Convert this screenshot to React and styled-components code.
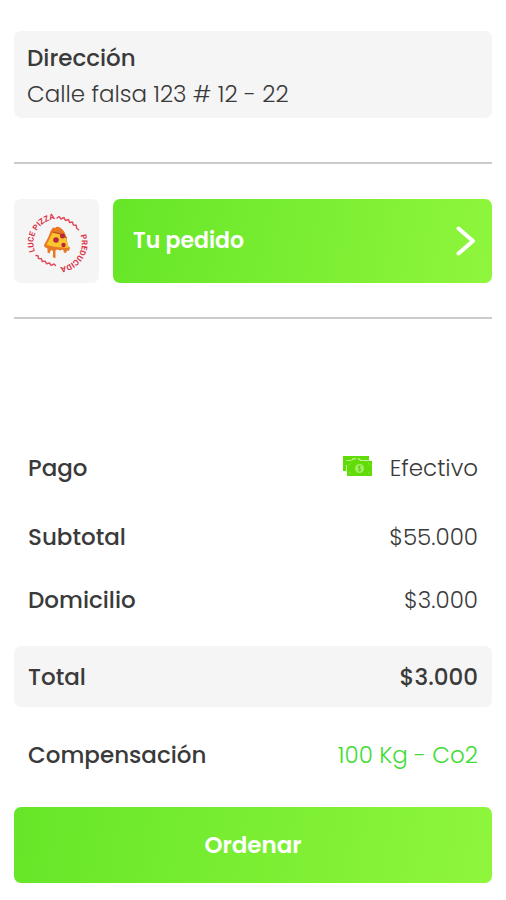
import React from "react";
import styled, { createGlobalStyle } from "styled-components";

const GlobalStyle = createGlobalStyle`
  *, *::before, *::after { box-sizing: border-box; }
  body {
    margin: 0;
    background: #fff;
    color: #3a3a3a;
    font-family: Poppins, Inter, sans-serif;
    font-size: 23px;
    line-height: 32px;
  }
`;

const Page = styled.main`
  padding: 31px 14px 17px;
`;

const AddressCard = styled.section`
  padding: 11px 13px 8px;
  border-radius: 7px;
  background: #f5f5f5;
`;

const Title = styled.h2`
  margin: 0 0 4px;
  font-size: 23px;
  font-weight: 500;
`;

const Address = styled.p`
  margin: 0;
  font-weight: 300;
`;

const Divider = styled.hr`
  height: 2px;
  margin: ${({ $top }) => $top}px 0 0;
  border: 0;
  background: #cbcbcb;
`;

const OrderRow = styled.div`
  display: flex;
  gap: 14px;
  margin-top: 35px;
`;

const LogoTile = styled.div`
  flex: none;
  width: 85px;
  height: 84px;
  border-radius: 7px;
  background: #f5f5f5;

  svg { display: block; }
`;

const GreenButton = styled.button`
  display: flex;
  align-items: center;
  justify-content: center;
  width: 100%;
  height: 76px;
  padding: 0 16px;
  border: 0;
  border-radius: 7px;
  background: linear-gradient(100deg, #66e628 0%, #8ff63c 100%);
  color: #fff;
  font: inherit;
  font-weight: 600;
  cursor: pointer;
`;

const OrderButton = styled(GreenButton)`
  flex: 1;
  justify-content: space-between;
  height: 84px;
  padding-left: 20px;
  font-size: 22px;
`;

const Summary = styled.dl`
  margin: 114px 0 4px;
`;

const Line = styled.div`
  display: flex;
  align-items: center;
  justify-content: space-between;
  height: ${({ $height }) => $height}px;
  padding: 0 14px;
`;

const TotalLine = styled(Line)`
  margin-top: 17px;
  border-radius: 7px;
  background: #f5f5f5;
`;

const Label = styled.dt`
  font-weight: 500;
`;

const Value = styled.dd`
  display: flex;
  align-items: center;
  gap: 18px;
  margin: 0;
  color: ${({ $green }) => ($green ? "#3fdc35" : "inherit")};
  font-weight: ${({ $strong }) => ($strong ? 500 : 300)};
`;

const LogoText = styled.text`
  fill: #dc2f45;
  font-family: Roboto, "Liberation Sans", sans-serif;
  font-size: 8px;
  font-weight: 700;
`;

function PizzaLogo() {
  return (
    <svg width="85" height="84" viewBox="0 0 85 84" role="img" aria-label="Luce Pizza">
      <defs>
        <path id="arc-left" d="M21 52.5A24 24 0 0 1 43.5 20" />
        <path id="arc-right" d="M66.5 36A24 24 0 0 1 44 68" />
      </defs>
      <LogoText>
        <textPath href="#arc-left">LUCE PIZZA</textPath>
      </LogoText>
      <LogoText>
        <textPath href="#arc-right">PREDUCIDA</textPath>
      </LogoText>
      <g fill="none" stroke="#df4a5b" strokeWidth="1.4" strokeLinecap="round" strokeLinejoin="round">
        <path d="M43 19l2-1.5 2 2.5 3-1.5 1.5 3 3-1 1 3 3-.5.8 3 3 .3.3 3 2 1.5" />
        <path d="M22 56.5l2 .3.5 2.7 3 .2.7 2.8 3-.4 1.3 2.7 3-.8 1.5 2.3 3-1.3 1.5 1.5" />
      </g>
      <path
        d="M41 29q2-2 5-.5 5 3 6.5 10.5L54 47l2 1.5-1 3.5-2-.5-1 2.5-2-.5-1-3-3 1-3-1-1.5 1v7q-1.5 1.5-2.5-.5v-6l-2-1-1.5 3.5-2-1v-4l-3-1.5-.5-2q3-5 5-9.5 1.5-5.5 4-8z"
        fill="#e77824"
      />
      <path d="M38.5 34q8 .5 13.5 5.5l2.5 9.500-6-.5-7-.5-9-2z" fill="#f9c62e" />
      <path d="M39 33q8 .5 14 6" fill="none" stroke="#b94d1e" strokeWidth="1" />
      <g fill="#b9253d">
        <circle cx="42" cy="41" r="2.8" />
        <circle cx="48.5" cy="37" r="2.5" />
        <circle cx="49.5" cy="46" r="2.2" />
      </g>
    </svg>
  );
}

function Chevron() {
  return (
    <svg width="20" height="32" viewBox="0 0 20 32" fill="none" aria-hidden="true">
      <path d="M2.5 3.5L17 16 2.5 28.5" stroke="#fff" strokeWidth="4" strokeLinecap="round" strokeLinejoin="round" />
    </svg>
  );
}

function CashIcon() {
  return (
    <svg width="29" height="24" viewBox="0 1 29 24" fill="none" aria-hidden="true">
      <rect width="26" height="15" y="1" fill="#62dc08" />
      <path d="M3.5 17V10M3.5 5.500h5M17 5.500h10" stroke="#c5f49a" />
      <path d="M9 5q1-2 4-1M15 3.500l3 2" stroke="#c5f49a" strokeWidth="1.3" />
      <rect x="4" y="6" width="25" height="15" fill="#62dc08" />
      <circle cx="16.5" cy="13.5" r="4.5" fill="#a3ed6b" />
      <path d="M18 11.5q-3-1-3 .5t1.5 1.5 1.500 1.5-3 .5M16.5 10.5v6" stroke="#62dc08" />
      <path d="M6 10l2-2M25 8l2 2M6 17l2 2M25 19l2-2" stroke="#86e545" />
    </svg>
  );
}

export default function App() {
  return (
    <>
      <GlobalStyle />
      <Page>
        <AddressCard>
          <Title>Dirección</Title>
          <Address>Calle falsa 123 # 12 - 22</Address>
        </AddressCard>
        <Divider $top={44} />
        <OrderRow>
          <LogoTile><PizzaLogo /></LogoTile>
          <OrderButton type="button">Tu pedido<Chevron /></OrderButton>
        </OrderRow>
        <Divider $top={34} />
        <Summary>
          <Line $height={70}><Label>Pago</Label><Value><CashIcon />Efectivo</Value></Line>
          <Line $height={68}><Label>Subtotal</Label><Value>$55.000</Value></Line>
          <Line $height={58}><Label>Domicilio</Label><Value>$3.000</Value></Line>
          <TotalLine $height={61}><Label>Total</Label><Value $strong>$3.000</Value></TotalLine>
          <Line $height={96}><Label>Compensación</Label><Value $green>100 Kg - Co2</Value></Line>
        </Summary>
        <GreenButton type="button">Ordenar</GreenButton>
      </Page>
    </>
  );
}
